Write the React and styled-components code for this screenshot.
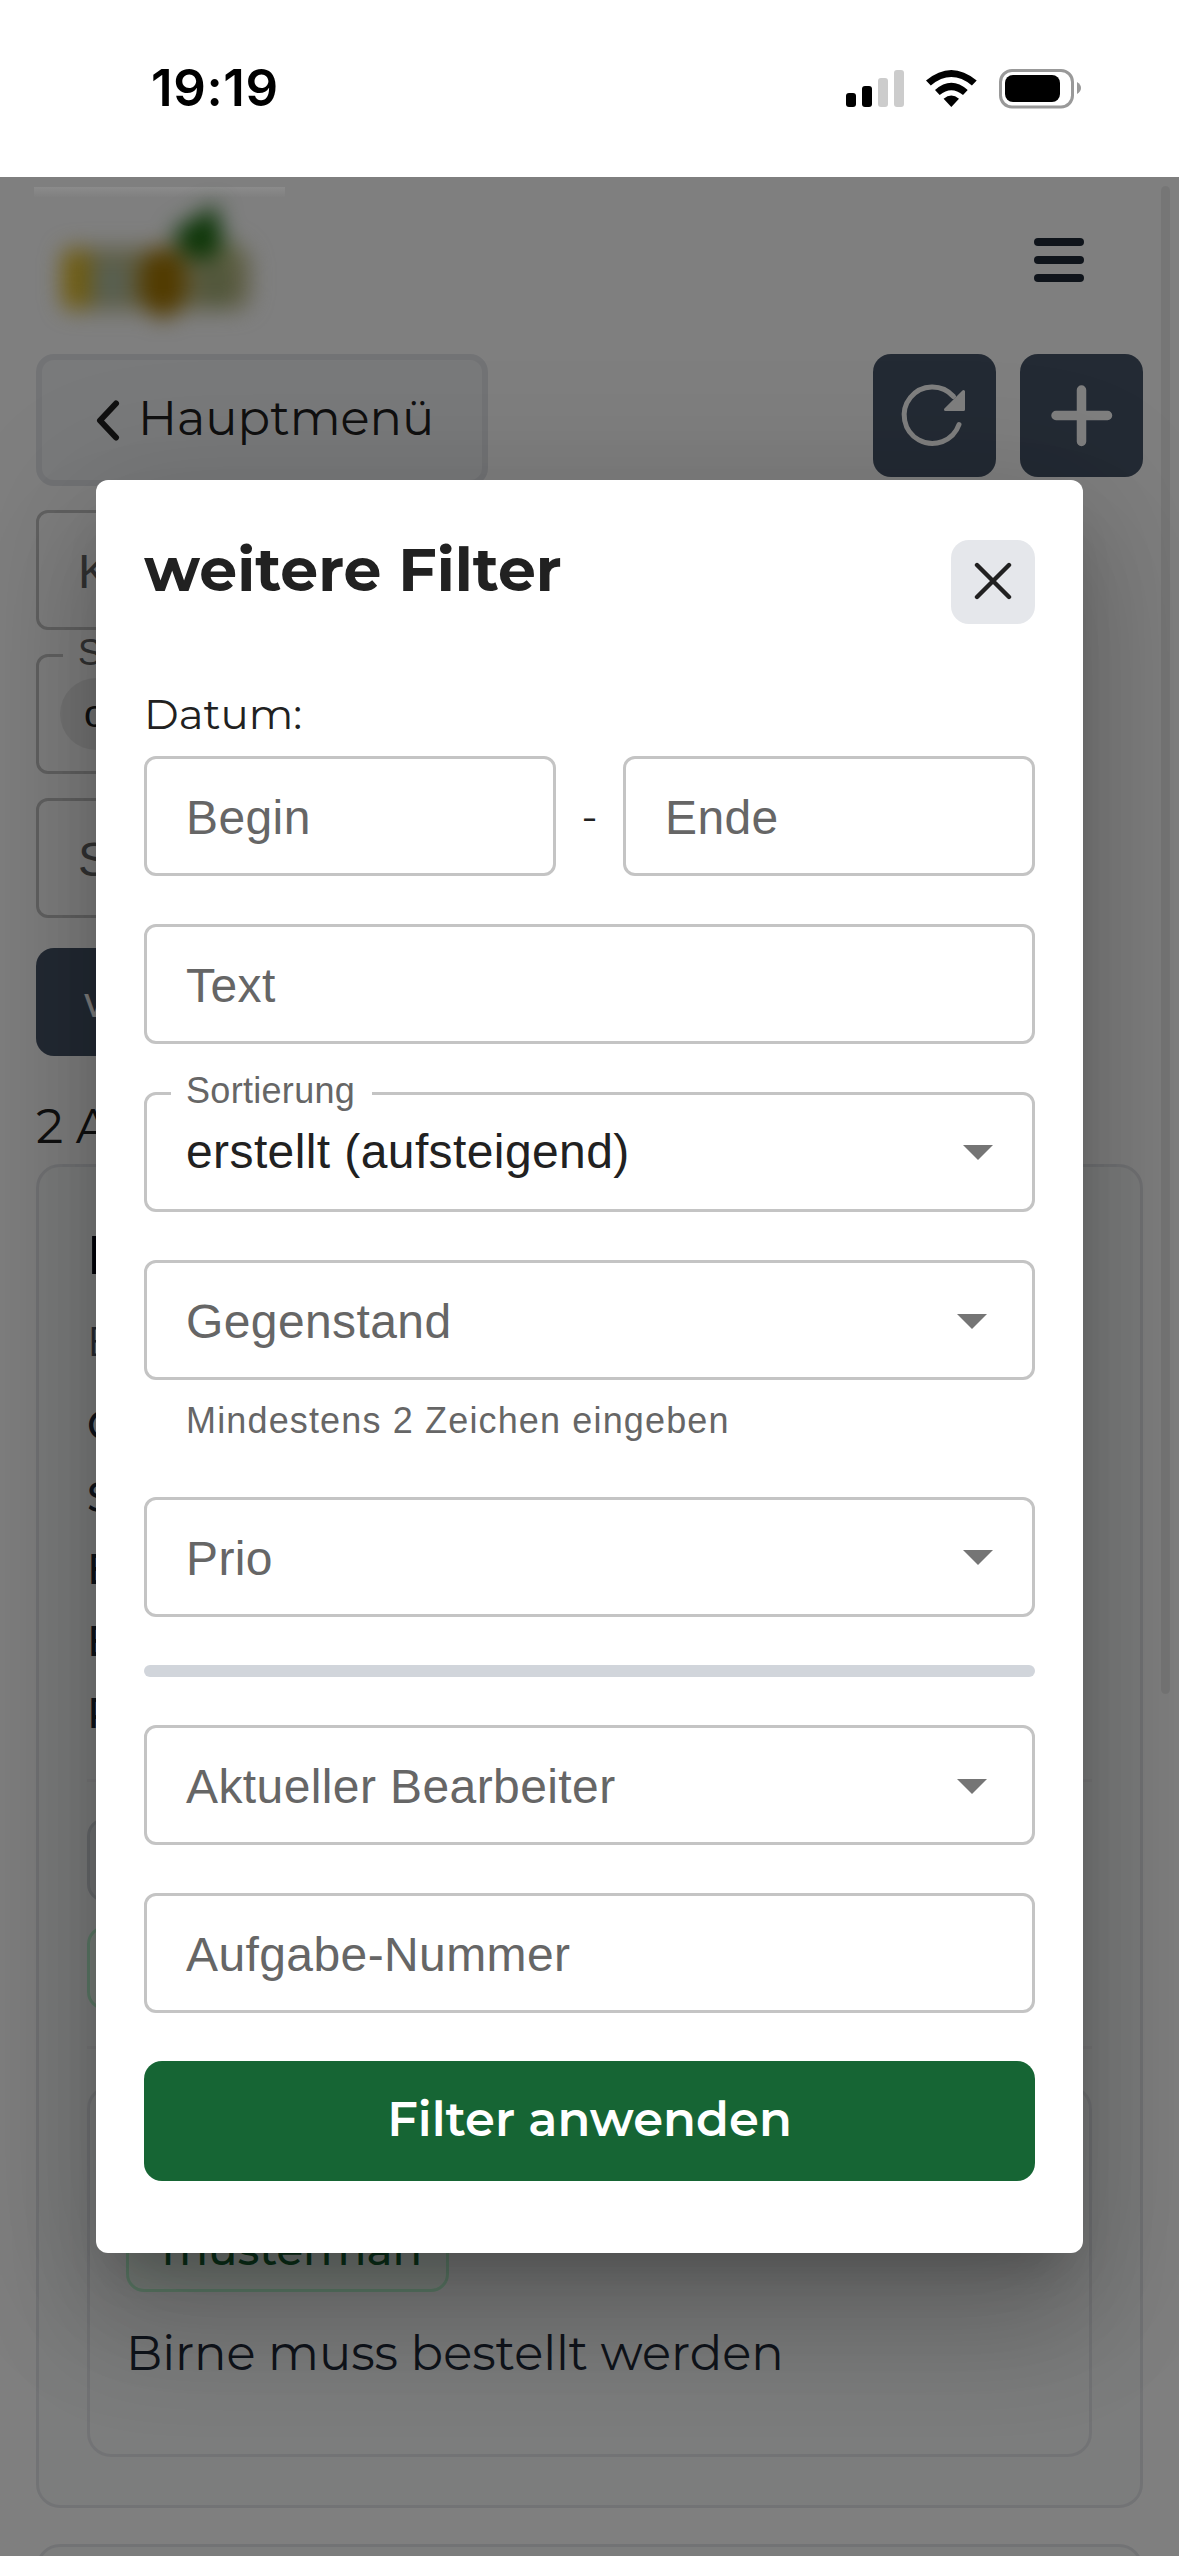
import React from 'react';
import styled, { createGlobalStyle } from 'styled-components';

const colors = {
  text: '#212121',
  muted: '#666666',
  outline: '#c4c4c4',
  slate: '#475569',
  navy: '#1f2937',
  green: '#166534',
  grey: '#e5e7eb',
};

const brandFont = "Montserrat, Inter, 'Open Sans', sans-serif";
const inputFont = "'Liberation Sans', Arial, sans-serif";

const GlobalStyle = createGlobalStyle`
  * {
    box-sizing: border-box;
  }

  body {
    margin: 0;
    background: #fff;
    font-family: ${brandFont};
    color: ${colors.text};
  }
`;

const Screen = styled.div`
  width: 1179px;
  height: 2556px;
  overflow: hidden;
  display: flex;
  flex-direction: column;
`;

const StatusBar = styled.div`
  height: 177px;
  flex: none;
  display: flex;
  justify-content: space-between;
  align-items: center;
  padding: 0 98px 0 151px;

  .time {
    font-family: Inter, sans-serif;
    font-size: 51px;
    font-weight: 600;
    line-height: 60px;
    letter-spacing: 0.6px;
    padding-bottom: 2px;
    color: #000;
  }
`;

const AppArea = styled.div`
  position: relative;
  flex: 1;
  overflow: hidden;
`;

const Page = styled.div`
  display: flex;
  flex-direction: column;
  padding: 0 36px;
`;

const Header = styled.div`
  height: 165px;
  margin: 0 59px 12px -2px;
  display: flex;
  justify-content: space-between;
  align-items: center;
`;

const LogoSvg = styled.svg`
  position: relative;
  z-index: 2;
`;

const Toolbar = styled.div`
  height: 132px;
  display: flex;
  align-items: flex-start;
  gap: 24px;
`;

const BackButton = styled.div`
  width: 452px;
  height: 132px;
  margin-right: auto;
  padding-left: 54px;
  border: 6px solid ${colors.grey};
  border-radius: 18px;
  background: #f3f4f6;
  display: flex;
  align-items: center;
  gap: 18px;
  font-size: 48px;
  line-height: 60px;

  span {
    padding-bottom: 5px;
  }
`;

const IconButton = styled.div`
  width: 123px;
  height: 123px;
  border-radius: 18px;
  background: ${colors.slate};
`;

const PageFields = styled.div`
  display: flex;
  flex-direction: column;
  gap: 24px;
  width: 900px;
  margin: 24px 0 30px;
`;

const Outline = styled.div`
  position: relative;
  flex: ${({ $grow }) => ($grow ? 1 : 'none')};
  height: 120px;
  padding: 0 39px;
  border: 3px solid ${colors.outline};
  border-radius: 12px;
  display: flex;
  justify-content: space-between;
  align-items: center;
  font-family: ${inputFont};
  font-size: 48px;
  line-height: 72px;
  letter-spacing: 0.4px;
  color: ${colors.muted};

  .placeholder {
    padding-top: 3px;
  }

  .value {
    color: ${colors.text};
  }
`;

const FloatingLabel = styled.div`
  position: absolute;
  top: -22px;
  left: 24px;
  padding: 0 17px 0 15px;
  background: #fff;
  font-size: 36px;
  line-height: 36px;
  letter-spacing: 0.3px;
`;

const Arrow = styled.svg`
  flex: none;
  margin-right: ${({ $inset }) => ($inset ? 6 : 0)}px;
  margin-top: ${({ $inset }) => ($inset ? 3 : 1)}px;
`;

const StatusChip = styled.div`
  height: 72px;
  margin-left: -18px;
  padding: 0 24px;
  border-radius: 36px;
  background: #ebebeb;
  font-size: 39px;
  color: ${colors.text};
`;

const FilterButton = styled.div`
  width: 400px;
  height: 108px;
  padding-left: 48px;
  border-radius: 18px;
  background: ${colors.slate};
  color: #fff;
  font-size: 42px;
  font-weight: 500;
  line-height: 108px;
`;

const ResultCount = styled.div`
  height: 108px;
  padding-top: 34px;
  font-size: 48px;
  line-height: 72px;
`;

const Card = styled.div`
  height: 1344px;
  flex: none;
  margin-bottom: 36px;
  padding: 48px;
  border: 3px solid ${colors.grey};
  border-radius: 24px;
  background: #f9fafa;
  color: ${colors.navy};
`;

const CardTitle = styled.div`
  margin-bottom: 9px;
  font-size: 54px;
  font-weight: 600;
  line-height: 81px;
  color: #030712;
`;

const CardSubtitle = styled.div`
  margin-bottom: 12px;
  font-size: 42px;
  line-height: 72px;
  color: #4b5563;
`;

const CardRow = styled.div`
  font-size: 42px;
  font-weight: 500;
  line-height: 72px;
`;

const CardDivider = styled.div`
  height: 3px;
  margin: ${({ $top }) => $top}px 0 36px;
  background: #f0f1f3;
`;

const tagTones = {
  grey: { background: '#e5e7eb', border: '#d1d5db', text: '#374151' },
  green: { background: '#f0fdf4', border: '#bbf7d0', text: colors.green },
};

const Tag = styled.div`
  width: 323px;
  height: 84px;
  margin-bottom: 24px;
  padding: 9px 33px;
  border: 3px solid ${({ $tone }) => tagTones[$tone].border};
  border-radius: 18px;
  background: ${({ $tone }) => tagTones[$tone].background};
  color: ${({ $tone }) => tagTones[$tone].text};
  font-size: 43.5px;
  font-weight: 500;
  line-height: 60px;
  white-space: nowrap;
`;

const CommentCard = styled.div`
  height: 372px;
  padding: 36px;
  border: 3px solid ${colors.grey};
  border-radius: 24px;

  .date {
    height: 84px;
    font-size: 42px;
    line-height: 60px;
  }

  .comment {
    padding-top: 1px;
    font-size: 48px;
    line-height: 72px;
    white-space: nowrap;
  }
`;

const Scrollbar = styled.div`
  position: absolute;
  top: 9px;
  right: 9px;
  width: 9px;
  height: 1508px;
  border-radius: 5px;
  background: rgba(0, 0, 0, 0.07);
`;

const Backdrop = styled.div`
  position: absolute;
  inset: 0;
  z-index: 1;
  display: flex;
  justify-content: center;
  align-items: center;
  background: rgba(0, 0, 0, 0.5);
`;

const Dialog = styled.div`
  width: 987px;
  height: 1773px;
  padding: 60px 48px 72px;
  border-radius: 12px;
  background: #fff;
  box-shadow: 0 33px 45px -21px rgba(0, 0, 0, 0.2), 0 72px 114px 9px rgba(0, 0, 0, 0.14),
    0 27px 138px 24px rgba(0, 0, 0, 0.12);
  display: flex;
  flex-direction: column;
`;

const DialogHeader = styled.div`
  display: flex;
  justify-content: space-between;
  align-items: flex-start;
  margin-bottom: 59px;

  .title {
    font-size: 60px;
    font-weight: 700;
    line-height: 60px;
  }
`;

const CloseButton = styled.div`
  width: 84px;
  height: 84px;
  border-radius: 18px;
  background: ${colors.grey};
  display: flex;
  justify-content: center;
  align-items: center;
`;

const DateLabel = styled.div`
  margin-bottom: 10px;
  font-size: 42px;
  line-height: 63px;
`;

const DateRow = styled.div`
  display: flex;
  align-items: center;

  .dash {
    width: 67px;
    text-align: center;
    font-size: 42px;
    line-height: 60px;
  }
`;

const Fields = styled.div`
  display: flex;
  flex-direction: column;
  gap: 48px;
`;

const HelperText = styled.div`
  height: 69px;
  padding: 13px 42px 0;
  font-family: ${inputFont};
  font-size: 36px;
  line-height: 56px;
  letter-spacing: 1.15px;
  color: ${colors.muted};
`;

const Separator = styled.div`
  height: 12px;
  border-radius: 6px;
  background: #d1d5db;
`;

const ApplyButton = styled.div`
  height: 120px;
  border-radius: 18px;
  background: ${colors.green};
  color: #fff;
  font-size: 48px;
  font-weight: 600;
  line-height: 117px;
  text-align: center;
`;

const StatusIcons = () => (
  <svg width="236" height="40" viewBox="845 68 236 40">
    <rect x="846" y="92" width="10" height="14" rx="3" />
    <rect x="862" y="85" width="10" height="21" rx="3" />
    <rect x="878" y="77" width="10" height="29" rx="3" fill="#ccc" />
    <rect x="894" y="69" width="10" height="37" rx="3" fill="#ccc" />
    <path d="M926 79.6Q951.3 58.4 976.7 79.6L971.9 84.4Q951.3 67.6 930.8 84.4Z" />
    <path d="M935 89Q951.3 74.6 967.7 89L963 94Q951.3 84.6 939.7 94Z" />
    <path d="M943.6 97.7Q951.3 91.4 959 97.7L951.3 106Z" />
    <rect x="1000.5" y="69.5" width="72" height="36.5" rx="11.5" fill="none" stroke="#999" strokeWidth="3" />
    <rect x="1005" y="74" width="55" height="27" rx="8" />
    <path d="M1077 81Q1081 83.5 1081 87T1077 93Z" fill="#999" />
  </svg>
);

const Logo = () => (
  <LogoSvg width="252" height="165" viewBox="34 177 252 165">
    <defs>
      <filter
        id="soft"
        x="-30%"
        y="-40%"
        width="160%"
        height="180%"
        colorInterpolationFilters="sRGB"
      >
        <feGaussianBlur stdDeviation="11" />
      </filter>
      <linearGradient id="shine" x1="0" y1="0" x2="0" y2="1">
        <stop offset="0" stopColor="#8b8b8b" />
        <stop offset="1" stopColor="#808080" />
      </linearGradient>
    </defs>
    <rect x="34" y="187" width="251" height="10" fill="url(#shine)" />
    <g filter="url(#soft)">
      <rect x="62" y="248" width="188" height="62" rx="16" fill="#5f5e45" />
      <rect x="62" y="248" width="28" height="62" rx="12" fill="#6f5c10" />
      <ellipse cx="110" cy="282" rx="18" ry="20" fill="#575f52" />
      <ellipse cx="163" cy="282" rx="24" ry="36" fill="#523b00" />
      <ellipse cx="216" cy="284" rx="16" ry="22" fill="#50563a" />
      <ellipse cx="228" cy="254" rx="14" ry="12" fill="#5d6040" />
      <path d="M172 232L216 204L224 246L204 262L182 252Z" fill="#0d3608" />
    </g>
  </LogoSvg>
);

const MenuIcon = () => (
  <svg width="50" height="44" viewBox="0 0 50 44" fill={colors.navy}>
    <rect width="50" height="8" rx="4" />
    <rect y="18" width="50" height="8" rx="4" />
    <rect y="36" width="50" height="8" rx="4" />
  </svg>
);

const BackIcon = () => (
  <svg width="24" height="41" viewBox="0 0 24 41" fill="none">
    <path
      d="M20 3.5L4 20.5L20 37.5"
      stroke={colors.text}
      strokeWidth="6"
      strokeLinecap="round"
      strokeLinejoin="round"
    />
  </svg>
);

const RefreshIcon = () => (
  <svg width="123" height="123" viewBox="873 354 123 123">
    <path
      d="M953.5 396.5A28.2 28.2 0 1 0 959 424.5"
      fill="none"
      stroke="#fff"
      strokeWidth="5"
      strokeLinecap="round"
    />
    <path
      d="M963.5 391.5V409.5H945.5Z"
      fill="#fff"
      stroke="#fff"
      strokeWidth="3"
      strokeLinejoin="round"
    />
  </svg>
);

const PlusIcon = () => (
  <svg width="123" height="123" viewBox="1020 354 123 123">
    <path
      d="M1081.5 390V441.5M1056 415.5H1107.5"
      stroke="#fff"
      strokeWidth="9.5"
      strokeLinecap="round"
    />
  </svg>
);

const DropdownArrow = ({ inset }) => (
  <Arrow $inset={inset} width="30" height="15" viewBox="0 0 30 15">
    <path d="M0 0H30L15 15Z" fill="#757575" />
  </Arrow>
);

const Field = ({ placeholder, label, value, arrow, grow }) => (
  <Outline $grow={grow}>
    {label && <FloatingLabel>{label}</FloatingLabel>}
    {value ? (
      <span className="value">{value}</span>
    ) : (
      <span className="placeholder">{placeholder}</span>
    )}
    {arrow && <DropdownArrow inset={arrow === 'autocomplete'} />}
  </Outline>
);

const TaskPage = () => (
  <Page>
    <Header>
      <Logo />
      <MenuIcon />
    </Header>
    <Toolbar>
      <BackButton>
        <BackIcon />
        <span>Hauptmenü</span>
      </BackButton>
      <IconButton>
        <RefreshIcon />
      </IconButton>
      <IconButton>
        <PlusIcon />
      </IconButton>
    </Toolbar>
    <PageFields>
      <Field placeholder="Kunde" />
      <Outline>
        <FloatingLabel>Status</FloatingLabel>
        <StatusChip>offen</StatusChip>
      </Outline>
      <Field placeholder="Suche" />
    </PageFields>
    <FilterButton>weitere Filter</FilterButton>
    <ResultCount>2 Aufgaben</ResultCount>
    <Card>
      <CardTitle>Birne</CardTitle>
      <CardSubtitle>Büro</CardSubtitle>
      {['Ort', 'Start', 'Ende', 'Ersteller', 'Prio'].map(row => (
        <CardRow key={row}>{row}</CardRow>
      ))}
      <CardDivider $top={30} />
      <Tag $tone="grey" />
      <Tag $tone="green" />
      <CardDivider $top={36} />
      <CommentCard>
        <div className="date" />
        <Tag $tone="green">musterman</Tag>
        <div className="comment">Birne muss bestellt werden</div>
      </CommentCard>
    </Card>
    <Card />
  </Page>
);

const FilterDialog = () => (
  <Dialog>
    <DialogHeader>
      <div className="title">weitere Filter</div>
      <CloseButton>
        <svg width="38" height="40" viewBox="0 0 38 40">
          <path
            d="M3 3L35 35M35 3L3 35"
            stroke={colors.text}
            strokeWidth="4.4"
            strokeLinecap="round"
          />
        </svg>
      </CloseButton>
    </DialogHeader>
    <DateLabel>Datum:</DateLabel>
    <Fields>
      <DateRow>
        <Field placeholder="Begin" grow />
        <div className="dash">-</div>
        <Field placeholder="Ende" grow />
      </DateRow>
      <Field placeholder="Text" />
      <Field label="Sortierung" value="erstellt (aufsteigend)" arrow="select" />
      <div>
        <Field placeholder="Gegenstand" arrow="autocomplete" />
        <HelperText>Mindestens 2 Zeichen eingeben</HelperText>
      </div>
      <Field placeholder="Prio" arrow="select" />
      <Separator />
      <Field placeholder="Aktueller Bearbeiter" arrow="autocomplete" />
      <Field placeholder="Aufgabe-Nummer" />
      <ApplyButton>Filter anwenden</ApplyButton>
    </Fields>
  </Dialog>
);

const App = () => (
  <Screen>
    <GlobalStyle />
    <StatusBar>
      <div className="time">19:19</div>
      <StatusIcons />
    </StatusBar>
    <AppArea>
      <TaskPage />
      <Scrollbar />
      <Backdrop>
        <FilterDialog />
      </Backdrop>
    </AppArea>
  </Screen>
);

export default App;
